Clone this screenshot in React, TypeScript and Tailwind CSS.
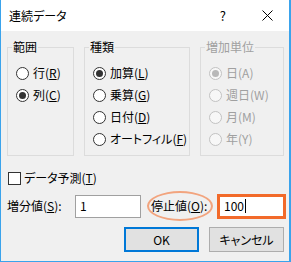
import React from 'react';

const font = "font-['Noto_Sans_CJK_JP','Noto_Sans',sans-serif] [font-feature-settings:'palt']";

type Opt = { pre: string; hotkey: string; checked?: boolean; disabled?: boolean };

const Radio: React.FC<Opt> = ({ pre, hotkey, checked, disabled }) => (
  <div className="flex items-center h-[22px] gap-[4px]">
    <span
      className={`w-[13px] h-[13px] rounded-full border flex items-center justify-center shrink-0 ${
        disabled ? 'border-[#c2c2c2] bg-[#f7f7f7]' : 'border-[#333] bg-white'
      }`}
    >
      {checked && (
        <span className={`w-[7px] h-[7px] rounded-full ${disabled ? 'bg-[#b8b8b8]' : 'bg-[#333]'}`}></span>
      )}
    </span>
    <span className={`whitespace-nowrap ${disabled ? 'text-[#a0a0a0]' : 'text-black'}`}>
      {pre}(
      {disabled ? hotkey : <span className="underline underline-offset-[1px]">{hotkey}</span>})
    </span>
  </div>
);

const Group: React.FC<{ title: string; width: string; children: React.ReactNode; disabled?: boolean }> = ({
  title,
  width,
  children,
  disabled,
}) => (
  <fieldset className={`${width} border border-[#dcdcdc] pl-[8px] pt-[7px] pb-[5px]`}>
    <legend className={`-ml-[4px] px-[1px] leading-[16px] ${disabled ? 'text-[#a0a0a0]' : 'text-black'}`}>
      {title}
    </legend>
    <div className="flex flex-col">{children}</div>
  </fieldset>
);

export default function App() {
  return (
    <div className={`${font} text-[12px] leading-[16px] w-[291px] h-[262px] flex flex-col bg-white border-l border-r-2 border-b border-[#3aa3ec]`}>
      {/* Title bar */}
      <div className="h-[31px] flex items-center pl-[8px] shrink-0">
        <span className="text-black">連続データ</span>
        <span className="ml-auto text-[13px] text-black mr-[36px]">?</span>
        <svg width="11" height="11" viewBox="0 0 11 11" className="mr-[16px]">
          <path d="M0.5 0.5 L10.5 10.5 M10.5 0.5 L0.5 10.5" stroke="#000" strokeWidth="1" />
        </svg>
      </div>

      {/* Body */}
      <div className="flex-1 bg-[#f0f0f0] pl-[6px] pr-[5px] pt-[8px] flex flex-col">
        <div className="flex gap-[10px]">
          <Group title="範囲" width="w-[67px]">
            <Radio pre="行" hotkey="R" />
            <Radio pre="列" hotkey="C" checked />
          </Group>
          <Group title="種類" width="w-[106px]">
            <Radio pre="加算" hotkey="L" checked />
            <Radio pre="乗算" hotkey="G" />
            <Radio pre="日付" hotkey="D" />
            <Radio pre="オートフィル" hotkey="F" />
          </Group>
          <Group title="増加単位" width="w-[84px]" disabled>
            <Radio pre="日" hotkey="A" checked disabled />
            <Radio pre="週日" hotkey="W" disabled />
            <Radio pre="月" hotkey="M" disabled />
            <Radio pre="年" hotkey="Y" disabled />
          </Group>
        </div>

        {/* Checkbox */}
        <div className="mt-[14px] h-[16px] flex items-center gap-[3px] pl-[1px]">
          <span className="w-[13px] h-[13px] border border-[#333] bg-white shrink-0"></span>
          <span>
            データ予測(<span className="underline underline-offset-[1px]">T</span>)
          </span>
        </div>

        {/* Inputs */}
        <div className="mt-[5px] h-[30px] flex items-center">
          <span className="w-[68px] shrink-0 whitespace-nowrap">
            増分値(<span className="underline underline-offset-[1px]">S</span>):
          </span>
          <div className="w-[66px] h-[23px] shrink-0 border border-[#a0a0a0] bg-white flex items-center pl-[4px]">1</div>
          <div className="relative ml-[6px] w-[66px] h-[30px] shrink-0 flex items-center pl-[4px]">
            <span className="whitespace-nowrap">
              停止値(<span className="underline underline-offset-[1px]">O</span>):
            </span>
            <div className="absolute inset-0 rounded-[50%] border-2 border-[#f2a47e]"></div>
          </div>
          <div className="ml-[4px] w-[69px] h-[25px] shrink-0 border-[3px] border-[#f26a2a] bg-white flex items-center pl-[4px]">
            100<span className="w-px h-[14px] bg-black ml-[1px]"></span>
          </div>
        </div>

        {/* Buttons */}
        <div className="mt-[6px] flex justify-end gap-[10px]">
          <button className="w-[75px] h-[25px] bg-[#e1e1e1] border-2 border-[#0078d7] text-black">OK</button>
          <button className="w-[75px] h-[25px] bg-[#e1e1e1] border border-[#adadad] text-black">キャンセル</button>
        </div>
      </div>
    </div>
  );
}
